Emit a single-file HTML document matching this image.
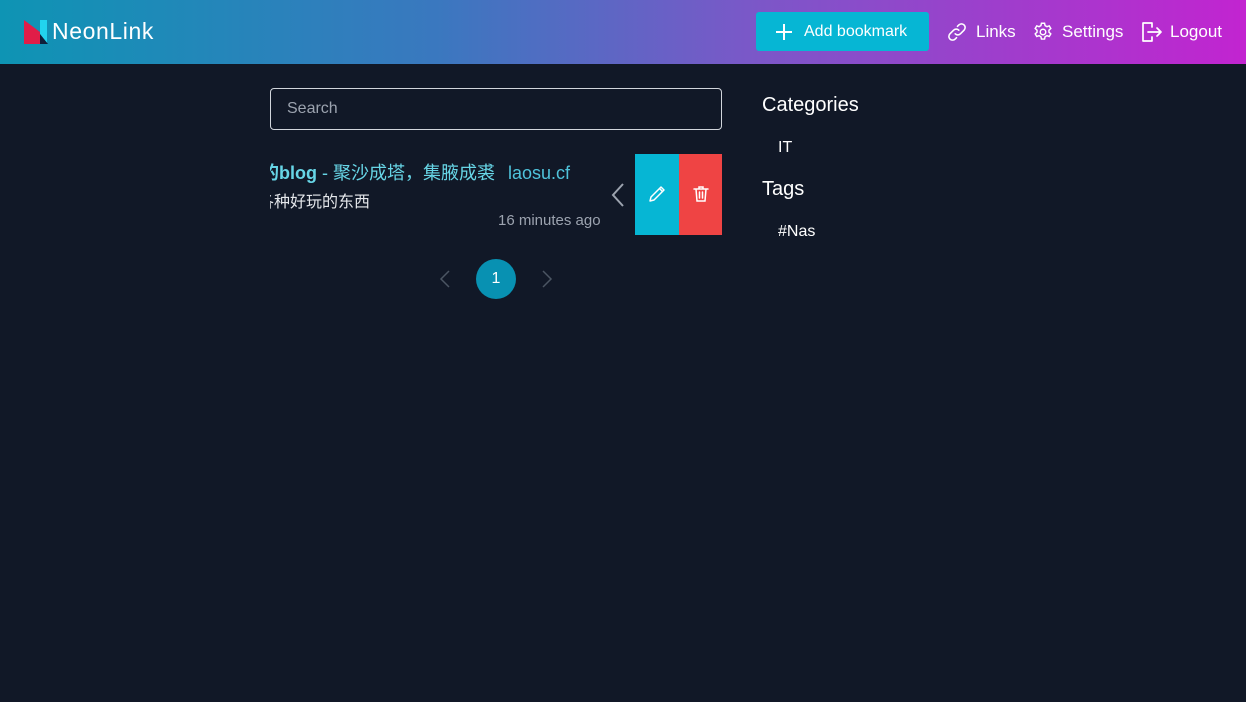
<!DOCTYPE html>
<html><head><meta charset="utf-8"><style>
*{margin:0;padding:0;box-sizing:border-box}
body{width:1246px;height:702px;background:#111827;font-family:"Liberation Sans","Noto Sans CJK SC",sans-serif;position:relative;overflow:hidden;color:#fff}
.hdr{position:absolute;left:0;top:0;width:1246px;height:64px;background:linear-gradient(90deg,#0e94b4 0%,#3a78bf 35%,#7a58c8 60%,#c224d0 100%)}
.logo{position:absolute;left:24px;top:20px}
.brand{position:absolute;left:52px;top:18px;font-size:23px;font-weight:300;letter-spacing:0.6px}
.nav{position:absolute;top:0;height:64px;display:flex;align-items:center;font-size:17px;font-weight:300}
.btn{position:absolute;left:756px;top:12px;width:173px;height:39px;background:#06b6d4;border-radius:3px;display:flex;align-items:center;font-size:16px;font-weight:300}
.abs{position:absolute}
.search{position:absolute;left:270px;top:88px;width:452px;height:42px;border:1px solid #d1d5db;border-radius:4px;padding:11px 16px;font-size:16px;color:#9ca3af}
.clip{position:absolute;left:270px;top:154px;width:365px;height:82px;overflow:hidden}
</style></head><body>
<div class="hdr">
 <svg class="logo" width="24" height="24" viewBox="0 0 24 24"><polygon points="0,0 16,12 16,24 0,24" fill="#e11d48"/><rect x="16" y="0" width="7" height="24" fill="#22d3ee"/><polygon points="16,14 24,24 16,24" fill="#0f1e3a"/></svg>
 <div class="brand">NeonLink</div>
 <div class="btn"><svg style="margin-left:19px" width="18" height="18" viewBox="0 0 18 18"><path d="M9 1v16M1 9h16" stroke="#fff" stroke-width="2"/></svg><span style="margin-left:11px">Add bookmark</span></div>
 <svg class="abs" style="left:946px;top:21px" width="22" height="22" viewBox="0 0 24 24" fill="none" stroke="#fff" stroke-width="1.7" stroke-linecap="round"><path d="M10 14a4 4 0 0 0 5.7 0l4-4a4 4 0 0 0-5.7-5.7l-1.5 1.5"/><path d="M14 10a4 4 0 0 0-5.7 0l-4 4a4 4 0 0 0 5.7 5.7l1.5-1.5"/></svg>
 <div class="nav" style="left:976px">Links</div>
 <svg class="abs" style="left:1032px;top:21px" width="22" height="22" viewBox="0 0 24 24" fill="none" stroke="#fff" stroke-width="1.6"><path d="M10.3 2.5h3.4l.6 2.6 2 1.1 2.5-.9 1.7 2.9-2 1.8v2.2l2 1.8-1.7 2.9-2.5-.9-2 1.1-.6 2.6h-3.4l-.6-2.6-2-1.1-2.5.9-1.7-2.9 2-1.8V10l-2-1.8 1.7-2.9 2.5.9 2-1.1z"/><circle cx="12" cy="12" r="3"/></svg>
 <div class="nav" style="left:1062px">Settings</div>
 <svg class="abs" style="left:1141px;top:20px" width="22" height="24" viewBox="0 0 22 24" fill="none" stroke="#fff" stroke-width="1.7" stroke-linecap="round" stroke-linejoin="round"><path d="M11 7V3H2v18h9v-4"/><path d="M7 12h13M16 8l4 4-4 4"/></svg>
 <div class="nav" style="left:1170px">Logout</div>
</div>
<div class="search">Search</div>
<div class="clip">
 <div class="abs" style="left:-9px;top:5px;font-size:18px;color:#67d5e6;white-space:nowrap"><b>的blog</b> - 聚沙成塔，集腋成裘 <span style="margin-left:8px;font-weight:300;color:#4fc3db">laosu.cf</span></div>
 <div class="abs" style="left:-12px;top:34px;font-size:16px;color:#e5e7eb;white-space:nowrap">各种好玩的东西</div>
 <div class="abs" style="left:228px;top:58px;font-size:15px;color:#9ca3af">16 minutes ago</div>
 <svg class="abs" style="left:340px;top:28px" width="16" height="26" viewBox="0 0 16 26"><path d="M13 2L3 13l10 11" stroke="#9ca3af" stroke-width="2" fill="none"/></svg>
</div>
<div class="abs" style="left:635px;top:154px;width:44px;height:81px;background:#06b6d4"><svg style="position:absolute;left:12px;top:30px" width="20" height="20" viewBox="0 0 20 20" fill="none" stroke="#fff" stroke-width="1.5" stroke-linejoin="round"><path d="M3 17l1-4L14 3l3 3L7 16z M12.5 4.5l3 3"/></svg></div>
<div class="abs" style="left:679px;top:154px;width:43px;height:81px;background:#ef4444"><svg style="position:absolute;left:12px;top:30px" width="20" height="20" viewBox="0 0 20 20" fill="none" stroke="#fff" stroke-width="1.5" stroke-linecap="round"><path d="M3 5h14M8 5V3h4v2M5 5l1 12h8l1-12M8.5 8v6M11.5 8v6"/></svg></div>
<svg class="abs" style="left:438px;top:270px" width="14" height="18" viewBox="0 0 14 18"><path d="M11 1L3 9l8 8" stroke="#4b5563" stroke-width="1.5" fill="none"/></svg>
<div class="abs" style="left:476px;top:259px;width:40px;height:40px;border-radius:50%;background:#0891b2;text-align:center;line-height:40px;font-size:16px">1</div>
<svg class="abs" style="left:540px;top:270px" width="14" height="18" viewBox="0 0 14 18"><path d="M3 1l8 8-8 8" stroke="#4b5563" stroke-width="1.5" fill="none"/></svg>
<div class="abs" style="left:762px;top:94px;font-size:20px">Categories</div>
<div class="abs" style="left:778px;top:139px;font-size:16px">IT</div>
<div class="abs" style="left:762px;top:178px;font-size:20px">Tags</div>
<div class="abs" style="left:778px;top:223px;font-size:16px">#Nas</div>
</body></html>
